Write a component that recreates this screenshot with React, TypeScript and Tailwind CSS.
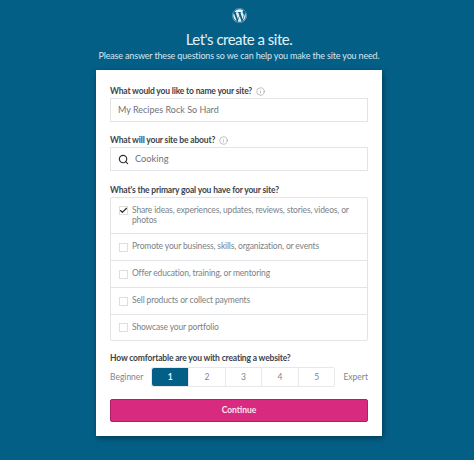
import { Check, Info, Search } from 'lucide-react';
import { FaWordpress } from 'react-icons/fa';

const goals = [
  { label: 'Share ideas, experiences, updates, reviews, stories, videos, or photos', checked: true, h: 'h-[35px]' },
  { label: 'Promote your business, skills, organization, or events', checked: false, h: 'h-[27px]' },
  { label: 'Offer education, training, or mentoring', checked: false, h: 'h-[27px]' },
  { label: 'Sell products or collect payments', checked: false, h: 'h-[27px]' },
  { label: 'Showcase your portfolio', checked: false, h: 'h-[26px]' },
];

const levels = [1, 2, 3, 4, 5];

function FieldLabel({ text, info }: { text: string; info?: boolean }) {
  return (
    <div className="flex h-[14px] items-center gap-[4px] text-[8.5px] font-bold tracking-[-0.17px] text-[#3c434a]">
      <span>{text}</span>
      {info && <Info size={9} strokeWidth={1.25} className="text-[#787c82]" />}
    </div>
  );
}

export default function App() {
  return (
    <div className="flex h-[460px] w-[474px] flex-col items-center overflow-hidden bg-[#045f87] pl-[4px] font-['Lato',sans-serif]">
      <FaWordpress size={15} className="mt-[8px] text-[#e6f0f5]" />
      <h1 className="mt-[7px] h-[18px] text-[15px] leading-[18px] tracking-[-0.5px] text-[#e3f1f7]">Let's create a site.</h1>
      <p className="h-[15px] text-[9px] leading-[15px] tracking-[-0.17px] whitespace-nowrap text-[#d5e6ee]">
        Please answer these questions so we can help you make the site you need.
      </p>
      <div className="mt-[7px] flex h-[366px] w-[286px] flex-col bg-white px-[14px] pt-[14px] shadow-[1px_2px_6px_rgba(0,0,0,0.4)]">
        <FieldLabel text="What would you like to name your site?" info />
        <div className="flex h-[24px] items-center border border-[#e2e4e7] pl-[7px] text-[9px] text-[#6f7479]">
          My Recipes Rock So Hard
        </div>
        <div className="mt-[11px]">
          <FieldLabel text="What will your site be about?" info />
        </div>
        <div className="flex h-[24px] items-center gap-[6px] border border-[#e2e4e7] pl-[7px] text-[9.25px] text-[#6f7479]">
          <Search size={11} strokeWidth={2.5} className="text-[#2c3338]" />
          Cooking
        </div>
        <div className="mt-[12px]">
          <FieldLabel text="What's the primary goal you have for your site?" />
        </div>
        <div className="flex flex-col rounded-[2px] border border-[#e2e4e7]">
          {goals.map((goal, i) => (
            <div
              key={goal.label}
              className={`flex ${goal.h} gap-[4px] px-[8px] text-[8.5px] leading-[9.5px] tracking-[-0.15px] text-[#7c8186] ${goal.checked ? 'items-start pt-[8px]' : 'items-center'} ${i > 0 ? 'border-t border-[#e2e4e7]' : ''}`}
            >
              <span className="flex h-[9px] w-[9px] shrink-0 items-center justify-center border border-[#dcdee0]">
                {goal.checked && <Check size={9} strokeWidth={3} className="shrink-0 text-[#23282d]" />}
              </span>
              <span>{goal.label}</span>
            </div>
          ))}
        </div>
        <div className="mt-[10px]">
          <FieldLabel text="How comfortable are you with creating a website?" />
        </div>
        <div className="mt-[2px] flex items-center justify-between text-[8.5px] text-[#80858a]">
          <span>Beginner</span>
          <div className="flex h-[20px] w-[184px] rounded-[2px] border border-[#e6e8ea]">
            {levels.map((n) => (
              <div
                key={n}
                className={`flex flex-1 items-center justify-center ${n === 1 ? 'rounded-l-[2px] bg-[#045f87] font-bold text-[#e3f1f7]' : 'border-l border-[#e6e8ea]'}`}
              >
                {n}
              </div>
            ))}
          </div>
          <span>Expert</span>
        </div>
        <button className="mt-[12px] h-[23px] w-full rounded-[2px] border border-[#b02066] bg-[#d82a7f] text-[8.5px] font-bold text-[#fbe4ef]">
          Continue
        </button>
      </div>
    </div>
  );
}
